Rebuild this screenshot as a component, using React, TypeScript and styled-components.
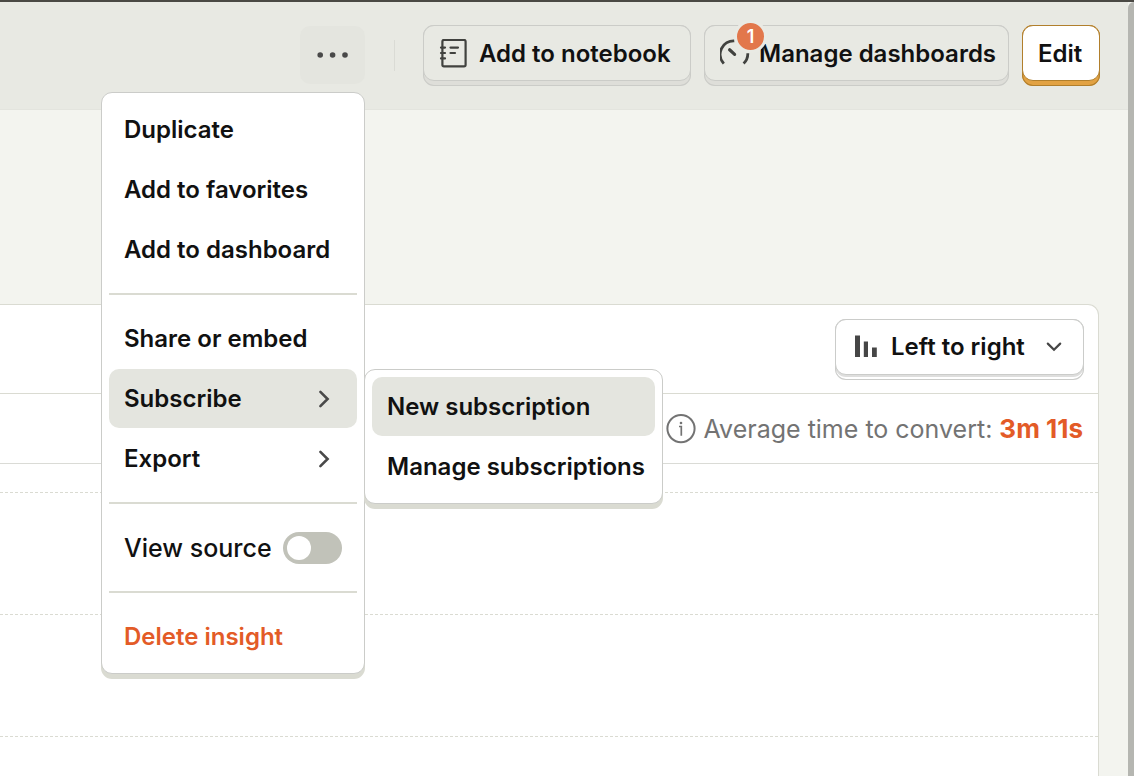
import React from 'react';
import styled, { createGlobalStyle, css } from 'styled-components';

const GlobalStyle = createGlobalStyle`
  *, *::before, *::after { box-sizing: border-box; }
  body {
    margin: 0;
    background: #f3f4ef;
    color: #111;
    font-family: Inter, "Liberation Sans", sans-serif;
    font-size: 24px;
    line-height: 32px;
  }
  button, select, input { font: inherit; color: inherit; margin: 0; }
  svg { display: block; flex: none; }
`;

const Page = styled.div`
  display: flex;
  min-height: 100vh;
  border-top: 2px solid #4a4944;
  overflow: hidden;
`;

const Content = styled.div`
  flex: 1;
  min-width: 0;
  display: flex;
  flex-direction: column;
`;

const ScrollThumb = styled.div`
  width: 6px;
  border-top-left-radius: 6px;
  background: #b5b6b1;
`;

const Header = styled.header`
  display: flex;
  justify-content: flex-end;
  align-items: flex-start;
  gap: 13px;
  height: 108px;
  padding: 23px 28px 0 0;
  background: #e8e9e3;
  border-bottom: 1px solid #e3e4de;
`;

const MoreWrap = styled.div`
  position: relative;
  margin-right: 16px;
  padding-top: 1px;
`;

const MoreButton = styled.button`
  display: flex;
  align-items: center;
  justify-content: center;
  width: 65px;
  height: 58px;
  padding: 0;
  border: 0;
  border-radius: 10px;
  background: #e4e5df;
`;

const Separator = styled.div`
  width: 1px;
  height: 31px;
  margin: 15px 15px 0 0;
  background: #dadbd5;
`;

const Raised = styled.button<{ $primary?: boolean; $width: number }>`
  display: block;
  width: ${p => p.$width}px;
  padding: 0 0 5px;
  border: 0;
  border-radius: 11px;
  font-weight: 600;
  white-space: nowrap;
  background: ${p => (p.$primary ? '#e2a243' : '#deded9')};
  box-shadow: inset 0 0 0 1px ${p => (p.$primary ? '#b17f2c' : '#cbccc8')};
`;

const Face = styled.span<{ $primary?: boolean }>`
  display: flex;
  align-items: center;
  height: 56px;
  padding: 2px 0 0 15px;
  border: 1px solid ${p => (p.$primary ? '#b17f2c' : '#cbccc8')};
  border-radius: 11px;
  background: ${p => (p.$primary ? '#fff' : '#e8e9e3')};
`;

const IconSlot = styled.span<{ $gap: number }>`
  position: relative;
  margin-right: ${p => p.$gap}px;
`;

const Badge = styled.span`
  position: absolute;
  left: 14px;
  top: -19px;
  width: 33px;
  height: 33px;
  border: 3px solid #e9eae4;
  border-radius: 50%;
  background: #e2774b;
  color: #fff;
  font-size: 18px;
  font-weight: 600;
  line-height: 27px;
  text-align: center;
`;

const panel = css`
  position: absolute;
  margin: 0;
  padding: 7px;
  list-style: none;
  background: #fff;
  border: 1px solid #cbccc9;
  border-radius: 11px;
  box-shadow: 0 5px 0 #dadbd2;
  display: flex;
  flex-direction: column;
  gap: 1px;
`;

const Menu = styled.ul`
  ${panel}
  top: 67px;
  right: 0;
  width: 264px;
  z-index: 2;
`;

const SubMenu = styled.ul`
  ${panel}
  top: 0;
  left: calc(100% + 7px);
  width: 299px;
`;

const MenuEntry = styled.li`
  position: relative;
`;

const MenuDivider = styled.li`
  height: 2px;
  margin: 13px 0;
  background: #dadbd2;
`;

const itemBox = css`
  display: flex;
  align-items: center;
  justify-content: space-between;
  width: 100%;
  height: 59px;
  border-radius: 10px;
  white-space: nowrap;
`;

const MenuItem = styled.button<{ $active?: boolean; $danger?: boolean }>`
  ${itemBox}
  padding: 0 27px 0 15px;
  border: 0;
  background: ${p => (p.$active ? '#e4e5df' : 'transparent')};
  color: ${p => (p.$danger ? '#e35b27' : '#111')};
  font-weight: 600;
  text-align: left;
`;

const SubItem = styled(MenuItem)`
  padding-right: 0;
`;

const SwitchRow = styled.label`
  ${itemBox}
  padding: 0 15px;
  font-size: 25px;
  font-weight: 500;
`;

const Switch = styled.input`
  appearance: none;
  width: 59px;
  height: 32px;
  padding: 4px;
  border-radius: 16px;
  background: #c1c2b9;

  &::before {
    content: '';
    display: block;
    width: 24px;
    height: 24px;
    border-radius: 50%;
    background: #fff;
  }
  &:checked::before {
    margin-left: auto;
  }
`;

const Card = styled.section`
  flex: 1;
  margin: 194px 29px 0 0;
  background: #fff;
  border: 1px solid #dadbd2;
  border-width: 1px 1px 0 0;
  border-top-right-radius: 11px;
`;

const Toolbar = styled.div`
  display: flex;
  justify-content: flex-end;
  align-items: flex-start;
  height: 89px;
  padding: 14px 14px 0 0;
  border-bottom: 1px solid #dadbd2;
`;

const SelectBox = styled.label`
  display: block;
  padding-bottom: 5px;
  border-radius: 11px;
  background: #dededd;
  box-shadow: inset 0 0 0 1px #cbccca, inset 0 -3px 0 #fff;
`;

const SelectFace = styled.span`
  display: flex;
  align-items: center;
  height: 56px;
  width: 249px;
  padding: 0 21px 0 18px;
  border: 1px solid #cbccca;
  border-radius: 11px;
  background: #fff;
`;

const Select = styled.select`
  flex: 1;
  min-width: 0;
  appearance: none;
  margin: 0 0 0 13px;
  padding: 0;
  border: 0;
  background: none;
  font-weight: 600;
`;

const Summary = styled.div`
  display: flex;
  align-items: center;
  justify-content: flex-end;
  height: 70px;
  padding-right: 15px;
  border-bottom: 1px solid #dadbd6;
  color: #737373;
  font-size: 25px;
  white-space: nowrap;

  svg { margin-right: 8px; }
`;

const SummaryValue = styled.strong`
  margin-left: 7px;
  color: #e35b27;
  font-size: 26px;
  font-weight: 700;
`;

const Chart = styled.div`
  padding-top: 28px;
`;

const GridLine = styled.div`
  border-top: 1px dashed #dadbd2;
  & + & { margin-top: 121px; }
`;

const Chevron = () => (
  <svg width="12" height="20" viewBox="0 0 12 20" fill="none" stroke="#494949" strokeWidth="2.6" aria-hidden="true">
    <path d="M2.400 2.800 9.600 10l-7.200 7.200" strokeLinecap="round" />
  </svg>
);

export default function App() {
  return (
    <>
      <GlobalStyle />
      <Page>
        <Content>
          <Header>
            <MoreWrap>
              <MoreButton aria-label="More" aria-expanded="true">
                <svg width="32" height="6" viewBox="0 0 32 6" fill="#494949" aria-hidden="true">
                  <circle cx="3.2" cy="3" r="2.8" />
                  <circle cx="15.600" cy="3" r="2.8" />
                  <circle cx="28" cy="3" r="2.8" />
                </svg>
              </MoreButton>
              <Menu>
                <MenuEntry><MenuItem>Duplicate</MenuItem></MenuEntry>
                <MenuEntry><MenuItem>Add to favorites</MenuItem></MenuEntry>
                <MenuEntry><MenuItem>Add to dashboard</MenuItem></MenuEntry>
                <MenuDivider role="separator" />
                <MenuEntry><MenuItem>Share or embed</MenuItem></MenuEntry>
                <MenuEntry>
                  <MenuItem $active aria-expanded="true">Subscribe<Chevron /></MenuItem>
                  <SubMenu>
                    <MenuEntry><SubItem $active>New subscription</SubItem></MenuEntry>
                    <MenuEntry><SubItem>Manage subscriptions</SubItem></MenuEntry>
                  </SubMenu>
                </MenuEntry>
                <MenuEntry><MenuItem>Export<Chevron /></MenuItem></MenuEntry>
                <MenuDivider role="separator" />
                <MenuEntry>
                  <SwitchRow>View source<Switch type="checkbox" role="switch" /></SwitchRow>
                </MenuEntry>
                <MenuDivider role="separator" />
                <MenuEntry><MenuItem $danger>Delete insight</MenuItem></MenuEntry>
              </Menu>
            </MoreWrap>
            <Separator />
            <Raised $width={268}>
              <Face>
                <IconSlot $gap={12}>
                  <svg width="28" height="30" viewBox="0 0 28 30" fill="none" stroke="#41423f" strokeWidth="2.2" strokeLinecap="round" aria-hidden="true">
                    <rect x="3.4" y="0.900" width="23.2" height="26.400" rx="1.6" />
                    <path d="M2 8.600h4M2 14h4M2 19.400h4M11.5 8.600h7.5M11.5 14h4.500" />
                  </svg>
                </IconSlot>
                Add to notebook
              </Face>
            </Raised>
            <Raised $width={305}>
              <Face>
                <IconSlot $gap={9}>
                  <svg width="30" height="30" viewBox="0 0 30 30" fill="none" stroke="#41423f" strokeWidth="2.8" aria-hidden="true">
                    <path d="M3.800 24.600A13.600 13.600 0 0 1 14.400 1.800M27.800 14.200A13.600 13.600 0 0 1 23.600 24.600" />
                    <path d="M9.600 10.800l5 4.600" strokeWidth="3.200" strokeLinecap="round" />
                  </svg>
                  <Badge>1</Badge>
                </IconSlot>
                Manage dashboards
              </Face>
            </Raised>
            <Raised $primary $width={78}>
              <Face $primary>Edit</Face>
            </Raised>
          </Header>
          <Card>
            <Toolbar>
              <SelectBox>
                <SelectFace>
                  <svg width="24" height="24" viewBox="0 0 24 24" fill="#464646" aria-hidden="true">
                    <path d="M1 0.500h5v21.500H1zM9.800 6.500h4.200v15.500H9.800zM18 12.500h4.800v9.500h-4.800z" />
                  </svg>
                  <Select aria-label="Layout">
                    <option>Left to right</option>
                    <option>Top to bottom</option>
                  </Select>
                  <svg width="16" height="10" viewBox="0 0 16 10" fill="none" stroke="#464646" strokeWidth="2.2" strokeLinecap="round" aria-hidden="true">
                    <path d="M1.800 1.600 8 7.800l6.200-6.200" />
                  </svg>
                </SelectFace>
              </SelectBox>
            </Toolbar>
            <Summary>
              <svg width="30" height="30" viewBox="0 0 30 30" fill="none" stroke="#737373" strokeWidth="2" aria-hidden="true">
                <circle cx="15" cy="14.600" r="13.600" />
                <path d="M13 12.500h2.300v9.200" strokeWidth="1.700" />
                <circle cx="15" cy="9" r="1.300" fill="#737373" stroke="none" />
              </svg>
              Average time to convert:
              <SummaryValue>3m 11s</SummaryValue>
            </Summary>
            <Chart>
              <GridLine />
              <GridLine />
              <GridLine />
            </Chart>
          </Card>
        </Content>
        <ScrollThumb />
      </Page>
    </>
  );
}
